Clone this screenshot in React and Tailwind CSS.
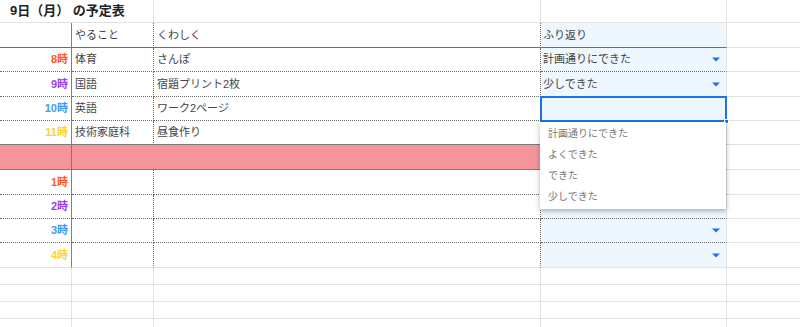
import React from "react";

const FONT = "font-['Liberation_Sans','Noto_Sans_CJK_JP',sans-serif]";

// per-side border styles (tailwind only has all-sides border-dotted)
const R_DOT = "border-r border-r-[#6a6a6a] [border-right-style:dotted]";
const R_SOLID = "border-r border-r-[#808080] [border-right-style:solid]";
const R_LIGHT = "border-r border-r-[#e2e2e2] [border-right-style:solid]";

const timeRows = [
  { t: "8時", c: "text-[#ff5a24]", b: "体育", d: "さんぽ", r: "計画通りにできた", h: "h-[24px]" },
  { t: "9時", c: "text-[#9a3ff0]", b: "国語", d: "宿題プリント2枚", r: "少しできた", h: "h-[25px]" },
  { t: "10時", c: "text-[#3d9bf5]", b: "英語", d: "ワーク2ページ", r: "", h: "h-[24px]", sel: true },
  { t: "11時", c: "text-[#fcd52c]", b: "技術家庭科", d: "昼食作り", r: "", h: "h-[24px]", solid: true },
];

const pmRows = [
  { t: "1時", c: "text-[#ff5a24]", h: "h-[25px]" },
  { t: "2時", c: "text-[#9a3ff0]", h: "h-[24px]" },
  { t: "3時", c: "text-[#3d9bf5]", h: "h-[24px]" },
  { t: "4時", c: "text-[#fcd52c]", h: "h-[25px]", last: true },
];

const Arrow = () => (
  <svg width="8" height="5" viewBox="0 0 8 5" className="ml-auto mr-[6px] shrink-0">
    <path d="M0 0.5h8L4 4.5z" fill="#1a73e8" />
  </svg>
);

const TimeRow = ({ row, arrow }) => {
  const bb = row.last
    ? "border-b border-b-[#e2e2e2] [border-bottom-style:solid]"
    : row.solid
      ? "border-b border-b-[#7a7a7a] [border-bottom-style:solid]"
      : "border-b border-b-[#6a6a6a] [border-bottom-style:dotted]";
  return (
    <div className={`flex ${row.h}`}>
      <div className={`w-[72px] shrink-0 flex items-center justify-end pr-[3px] ${R_SOLID} ${bb} text-[11px] font-bold ${row.c}`}>
        {row.t}
      </div>
      <div className={`w-[82px] shrink-0 flex items-center pl-[3px] ${R_DOT} ${bb}`}>
        {row.b}
      </div>
      <div className={`w-[387px] shrink-0 flex items-center pl-[3px] ${R_DOT} ${bb}`}>
        {row.d}
      </div>
      <div className={`w-[186px] shrink-0 flex items-center pl-[2px] bg-[#eef7fd] ${R_LIGHT} ${bb}`}>
        <span>{row.r}</span>
        {arrow && <Arrow />}
      </div>
      <div className="flex-1 border-b border-[#e2e2e2]" />
    </div>
  );
};

export default function App() {
  const headB = "border-b border-b-[#6e6e6e] [border-bottom-style:solid]";
  return (
    <div className={`relative w-[800px] h-[327px] overflow-hidden bg-white text-[11px] text-[#444] ${FONT}`}>
      {/* title row */}
      <div className="flex h-[23px]">
        <div className="w-[154px] shrink-0 flex items-center pl-[10px] border-r border-b border-[#e2e2e2] text-[13px] font-bold text-[#222]">
          9日（月） の予定表
        </div>
        <div className="w-[387px] shrink-0 border-r border-b border-[#e2e2e2]" />
        <div className="w-[186px] shrink-0 border-r border-b border-[#e2e2e2]" />
        <div className="flex-1 border-b border-[#e2e2e2]" />
      </div>

      {/* header row */}
      <div className="flex h-[25px]">
        <div className={`w-[72px] shrink-0 ${R_SOLID} ${headB}`} />
        <div className={`w-[82px] shrink-0 flex items-center pl-[3px] ${R_DOT} ${headB}`}>
          やること
        </div>
        <div className={`w-[387px] shrink-0 flex items-center pl-[3px] ${R_DOT} ${headB}`}>
          くわしく
        </div>
        <div className={`w-[186px] shrink-0 flex items-center pl-[2px] bg-[#eef7fd] ${R_LIGHT} ${headB}`}>
          ふり返り
        </div>
        <div className="flex-1 border-b border-[#e2e2e2]" />
      </div>

      {timeRows.map((row) => (
        <TimeRow key={row.t} row={row} arrow={!row.sel} />
      ))}

      {/* lunch break */}
      <div className="flex h-[25px]">
        <div className="w-[72px] shrink-0 bg-[#f4959b] border-r border-r-[#7a7a7a] border-b border-b-[#7a7a7a]" />
        <div className="w-[655px] shrink-0 bg-[#f4959b] border-r border-r-[#e2e2e2] border-b border-b-[#7a7a7a]" />
        <div className="flex-1 border-b border-[#e2e2e2]" />
      </div>

      {pmRows.map((row) => (
        <TimeRow key={row.t} row={{ ...row, b: "", d: "", r: "" }} arrow />
      ))}

      {[0, 1, 2, 3].map((i) => (
        <div key={i} className="flex h-[17px]">
          <div className="w-[72px] shrink-0 border-r border-b border-[#e2e2e2]" />
          <div className="w-[82px] shrink-0 border-r border-b border-[#e2e2e2]" />
          <div className="w-[387px] shrink-0 border-r border-b border-[#e2e2e2]" />
          <div className="w-[186px] shrink-0 border-r border-b border-[#e2e2e2]" />
          <div className="flex-1 border-b border-[#e2e2e2]" />
        </div>
      ))}

      {/* selected cell */}
      <div className="absolute left-[540px] top-[96px] w-[187px] h-[26px] border-2 border-[#1a73e8]" />
      <div className="absolute left-[724px] top-[119px] w-[5px] h-[5px] bg-[#1a73e8] border border-white" />

      {/* dropdown menu */}
      <div className="absolute left-[540px] top-[122px] w-[186px] h-[87px] bg-white shadow-[0_2px_5px_rgba(0,0,0,0.3)] pt-[1px] text-[10px] text-[#777]">
        {["計画通りにできた", "よくできた", "できた", "少しできた"].map((o) => (
          <div key={o} className="h-[21px] flex items-center pl-[8px]">
            {o}
          </div>
        ))}
      </div>
    </div>
  );
}
